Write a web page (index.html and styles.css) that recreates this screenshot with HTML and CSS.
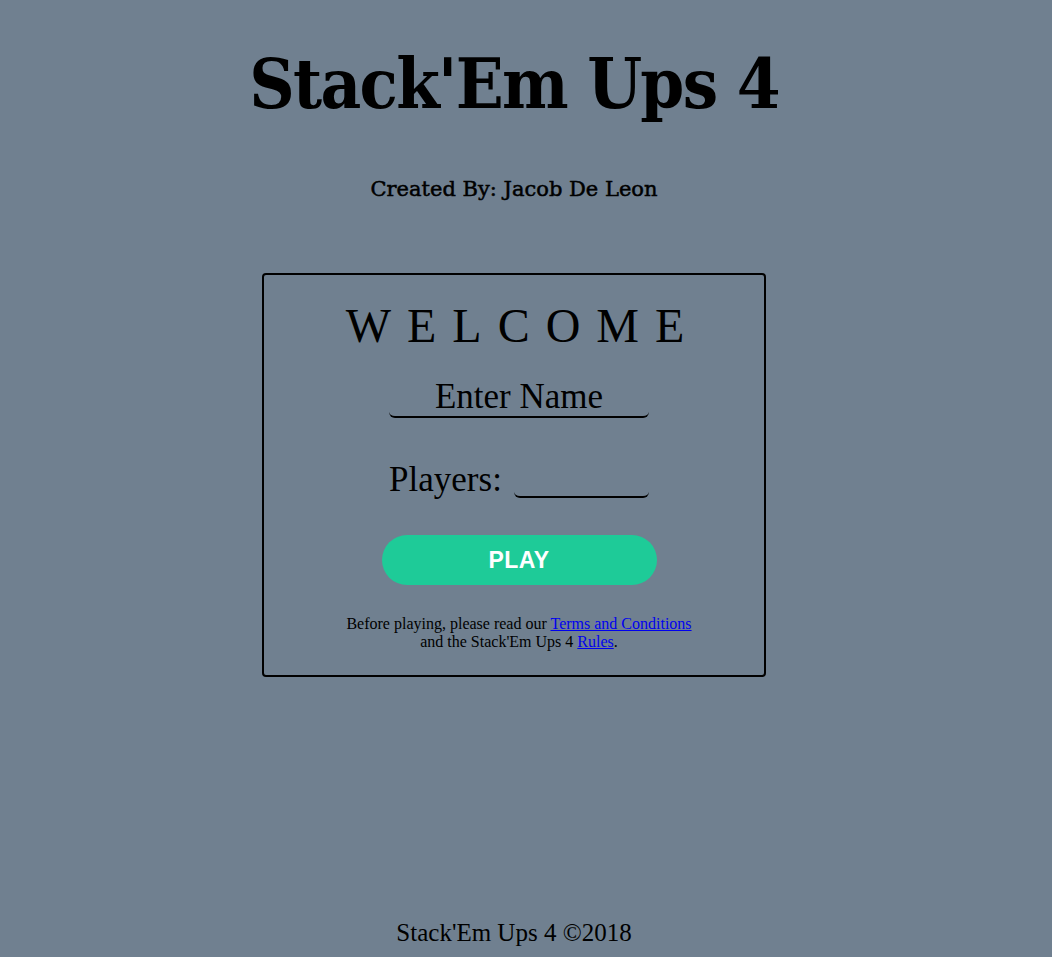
FILE: index.html
```html
<!DOCTYPE html>
<html>
<head>
<meta charset="utf-8">
<title>Stack'Em Ups 4</title>
<link rel="stylesheet" href="styles.css">
</head>
<body>
<div class="page">
  <h1 class="title">Stack'Em Ups 4</h1>
  <p class="byline">Created By: Jacob De Leon</p>
  <div class="card">
    <div class="card-inner">
      <h2 class="welcome">WELCOME</h2>
      <input class="name-input" type="text" placeholder="Enter Name">
      <div class="players-row">
        <label class="players-label">Players:</label>
        <input class="players-input" type="text">
      </div>
      <button class="play-btn">PLAY</button>
      <p class="terms">Before playing, please read our <a href="#">Terms and Conditions</a><br>and the Stack'Em Ups 4 <a href="#">Rules</a>.</p>
    </div>
  </div>
  <footer class="footer">Stack'Em Ups 4 ©2018</footer>
</div>
</body>
</html>
```

FILE: styles.css
```css
html, body {
  margin: 0;
  padding: 0;
  background: #708090;
}
.page {
  width: 1028px;
  height: 957px;
  display: flex;
  flex-direction: column;
  align-items: center;
  font-family: "Liberation Serif", "Times New Roman", serif;
  color: #000;
}
.title {
  margin: 44px 0 0 0;
  font-family: "DejaVu Serif", serif;
  font-stretch: condensed;
  font-weight: bold;
  font-size: 70px;
  line-height: 80px;
  letter-spacing: -1.7px;
}
.byline {
  margin: 52px 0 0 0;
  font-family: "DejaVu Serif", serif;
  font-size: 21px;
  line-height: 26px;
  -webkit-text-stroke: 0.5px #000;
}
.card {
  margin-top: 71px;
  width: 500px;
  height: 400px;
  border: 2px solid #000;
  border-radius: 4px;
  box-sizing: content-box;
}
.card-inner {
  padding-left: 10px;
  display: flex;
  flex-direction: column;
  align-items: center;
}
.welcome {
  margin: 23px -16px 0 -8px;
  font-weight: normal;
  font-size: 48px;
  line-height: 56px;
  letter-spacing: 16px;
}
.name-input {
  margin-top: 23px;
  width: 260px;
  padding: 0;
  border: none;
  border-bottom: 2px solid #000;
  border-radius: 6px;
  background: transparent;
  font-family: "Liberation Serif", serif;
  font-size: 35px;
  line-height: 39px;
  height: 39px;
  text-align: center;
  outline: none;
  color: #000;
}
.name-input::placeholder {
  color: #000;
  opacity: 1;
}
.players-row {
  margin-top: 42px;
  display: flex;
  align-items: flex-end;
  gap: 12px;
}
.players-label {
  font-size: 35px;
  line-height: 39px;
}
.players-input {
  width: 135px;
  height: 30px;
  padding: 0;
  border: none;
  border-bottom: 2px solid #000;
  border-radius: 6px;
  background: transparent;
  margin-bottom: 1px;
  outline: none;
}
.play-btn {
  margin-top: 36px;
  width: 275px;
  height: 50px;
  border: none;
  border-radius: 25px;
  background: #1ecb98;
  color: #fff;
  font-family: "Liberation Sans", Arial, sans-serif;
  font-weight: bold;
  font-size: 23px;
  letter-spacing: 0.5px;
  padding: 0;
}
.terms {
  margin: 30px 0 0 0;
  font-size: 16px;
  line-height: 18px;
  text-align: center;
}
.terms a {
  color: #0000ee;
}
.footer {
  margin-top: auto;
  margin-bottom: 10px;
  font-size: 25px;
  line-height: 28px;
}
```
